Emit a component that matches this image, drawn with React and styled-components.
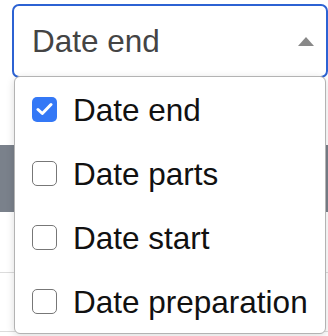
import React, { useState } from "react";
import styled, { createGlobalStyle } from "styled-components";

const Global = createGlobalStyle`
  html, body { margin: 0; padding: 0; background: #fff; }
  body { font-family: "Liberation Sans", Arial, sans-serif; overflow: hidden; }
  #root { width: 328px; height: 336px; position: relative; overflow: hidden; }
`;

const Page = styled.div`
  position: relative;
  width: 328px;
  height: 336px;
  display: flex;
  flex-direction: column;
`;

const SelectBox = styled.div`
  margin: 4px 0 0 12px;
  height: 74px;
  width: 316px;
  box-sizing: border-box;
  border: 2px solid #2c62d3;
  border-radius: 7px;
  display: flex;
  align-items: center;
  padding: 0 12px 0 18px;
  font-size: 31.5px;
  color: #444;
  background: #fff;
  flex-shrink: 0;
`;

const SelectValue = styled.span`
  flex: 1;
  padding-top: 1px;
`;

const Arrow = styled.svg`
  width: 16px;
  height: 9px;
  margin-top: 1px;
`;

const Backdrop = styled.div`
  display: flex;
  flex-direction: column;
  flex: 1;
`;

const HeaderBand = styled.div`
  margin-top: 67px;
  height: 67px;
  background: #7a818b;
`;

const RowLine = styled.div`
  margin-top: ${(p) => p.$gap}px;
  height: 1px;
  background: #dcdcdc;
`;

const Menu = styled.div`
  position: absolute;
  left: 14px;
  top: 76px;
  width: 312px;
  box-sizing: border-box;
  border: 1px solid #b3b3b3;
  border-radius: 6px;
  background: #fff;
  box-shadow: 0 2px 8px rgba(0, 0, 0, 0.14);
  display: flex;
  flex-direction: column;
  padding: 0;
`;

const Item = styled.label`
  height: 64px;
  display: flex;
  align-items: center;
  padding-left: 17px;
  gap: 16px;
  font-size: 31.5px;
  color: #111;
  cursor: pointer;
`;

const Box = styled.span`
  width: 25px;
  height: 25px;
  box-sizing: border-box;
  border-radius: 5px;
  display: flex;
  align-items: center;
  justify-content: center;
  background: ${(p) => (p.$checked ? "#3478f6" : "#fff")};
  border: ${(p) => (p.$checked ? "none" : "1.5px solid #777")};
  flex-shrink: 0;
`;

const Label = styled.span`
  padding-top: 2px;
`;

const options = ["Date end", "Date parts", "Date start", "Date preparation"];

export default function App() {
  const [sel, setSel] = useState({ "Date end": true });
  return (
    <Page>
      <Global />
      <SelectBox>
        <SelectValue>Date end</SelectValue>
        <Arrow viewBox="0 0 16 9">
          <path d="M0 9 L8 0 L16 9 Z" fill="#888" />
        </Arrow>
      </SelectBox>
      <Backdrop>
        <HeaderBand />
        <RowLine $gap={60} />
        <RowLine $gap={58} />
      </Backdrop>
      <Menu>
        {options.map((o) => (
          <Item key={o} onClick={() => setSel((s) => ({ ...s, [o]: !s[o] }))}>
            <Box $checked={!!sel[o]}>
              {sel[o] && (
                <svg width="17" height="14" viewBox="0 0 17 14">
                  <path
                    d="M2 7.5 L6.3 11.5 L15 2.5"
                    fill="none"
                    stroke="#fff"
                    strokeWidth="3"
                    strokeLinecap="round"
                    strokeLinejoin="round"
                  />
                </svg>
              )}
            </Box>
            <Label>{o}</Label>
          </Item>
        ))}
      </Menu>
    </Page>
  );
}
